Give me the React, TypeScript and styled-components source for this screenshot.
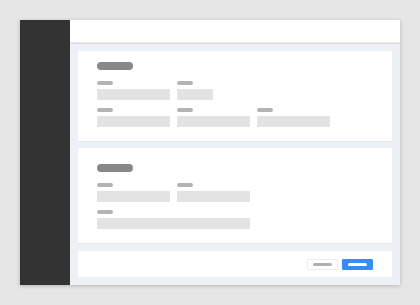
import React from "react";
import styled, { createGlobalStyle } from "styled-components";

const Global = createGlobalStyle`
  html, body { margin: 0; padding: 0; background: #e6e6e6; font-family: "Liberation Sans", Arial, sans-serif; }
  #root { width: 420px; height: 305px; }
`;

const Page = styled.div`
  width: 420px;
  height: 305px;
  box-sizing: border-box;
  padding: 20px;
  background: #e6e6e6;
`;

const Window = styled.div`
  display: flex;
  width: 380px;
  height: 265px;
  box-shadow: 0 1px 4px rgba(0, 0, 0, 0.22);
  background: #edf0f4;
`;

const Sidebar = styled.div`
  width: 50px;
  flex: none;
  background: #333333;
`;

const Main = styled.div`
  flex: 1;
  display: flex;
  flex-direction: column;
  background: #edf0f4;
`;

const Header = styled.div`
  height: 23px;
  flex: none;
  background: #ffffff;
  box-shadow: 0 1px 1px rgba(0, 0, 0, 0.06);
  border-bottom: 1px solid #e3e6ea;
  box-sizing: border-box;
`;

const Content = styled.div`
  flex: 1;
  display: flex;
  flex-direction: column;
  padding: 8px;
  gap: 7px;
`;

const Card = styled.div<{ $pt: number; $h: number }>`
  background: #ffffff;
  height: ${(p) => p.$h}px;
  box-sizing: border-box;
  padding: ${(p) => p.$pt}px 19px 0 19px;
  display: flex;
  flex-direction: column;
  box-shadow: 0 1px 1px rgba(0, 0, 0, 0.03);
`;

const Title = styled.div`
  width: 36px;
  height: 8px;
  border-radius: 4px;
  background: #888888;
  margin-bottom: 11px;
`;

const Rows = styled.div`
  display: flex;
  flex-direction: column;
  gap: 8px;
`;

const Row = styled.div`
  display: flex;
  gap: 7px;
`;

const Field = styled.div`
  display: flex;
  flex-direction: column;
  gap: 4px;
`;

const Label = styled.div`
  width: 16px;
  height: 4px;
  border-radius: 2px;
  background: #b4b4b4;
`;

const Input = styled.div<{ $w: number }>`
  width: ${(p) => p.$w}px;
  height: 11px;
  border-radius: 1px;
  background: #e3e3e3;
`;

const Footer = styled.div`
  background: #ffffff;
  height: 26px;
  margin-top: 1px;
  box-sizing: border-box;
  padding: 0 19px;
  display: flex;
  align-items: center;
  justify-content: flex-end;
  gap: 4px;
`;

const Button = styled.div<{ $primary?: boolean }>`
  width: 31px;
  height: 11px;
  box-sizing: border-box;
  border-radius: 1px;
  display: flex;
  align-items: center;
  justify-content: center;
  background: ${(p) => (p.$primary ? "#3a8cf5" : "#ffffff")};
  border: 1px solid ${(p) => (p.$primary ? "#3a8cf5" : "#ececec")};
`;

const ButtonBar = styled.div<{ $primary?: boolean }>`
  width: 19px;
  height: 3px;
  border-radius: 2px;
  background: ${(p) => (p.$primary ? "#ffffff" : "#b0b0b0")};
`;

const F = ({ w }: { w: number }) => (
  <Field>
    <Label />
    <Input $w={w} />
  </Field>
);

export default function App() {
  return (
    <>
      <Global />
      <Page>
        <Window>
          <Sidebar />
          <Main>
            <Header />
            <Content>
              <Card $pt={11} $h={90}>
                <Title />
                <Rows>
                  <Row>
                    <F w={73} />
                    <F w={36} />
                  </Row>
                  <Row>
                    <F w={73} />
                    <F w={73} />
                    <F w={73} />
                  </Row>
                </Rows>
              </Card>
              <Card $pt={16} $h={95}>
                <Title />
                <Rows>
                  <Row>
                    <F w={73} />
                    <F w={73} />
                  </Row>
                  <Row>
                    <F w={153} />
                  </Row>
                </Rows>
              </Card>
              <Footer>
                <Button>
                  <ButtonBar />
                </Button>
                <Button $primary>
                  <ButtonBar $primary />
                </Button>
              </Footer>
            </Content>
          </Main>
        </Window>
      </Page>
    </>
  );
}
